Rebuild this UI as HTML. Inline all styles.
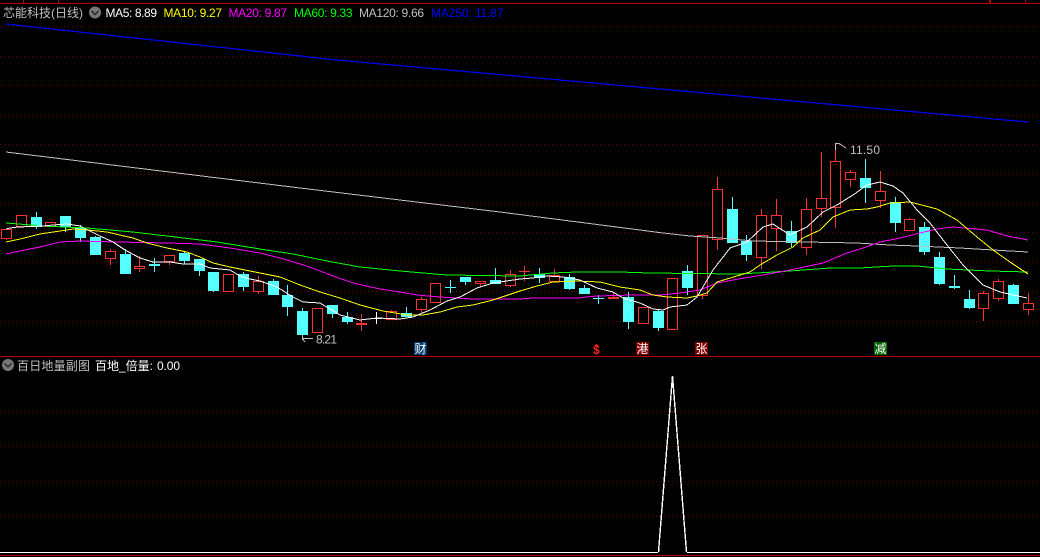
<!DOCTYPE html>
<html lang="zh"><head><meta charset="utf-8"><title>芯能科技</title>
<style>
html,body{margin:0;padding:0;background:#000;width:1040px;height:557px;overflow:hidden}
svg{display:block}
text{font-family:"Liberation Sans","WenQuanYi Zen Hei","Noto Sans CJK SC",sans-serif;font-size:12px}
</style></head><body>
<svg width="1040" height="557" viewBox="0 0 1040 557" xmlns="http://www.w3.org/2000/svg">
<rect width="1040" height="557" fill="#000"/>
<g shape-rendering="geometricPrecision" stroke="#700000" stroke-width="1" stroke-dasharray="1 3">
<path d="M0 26.5H1040M0 56.5H1040M0 85.5H1040M0 115.5H1040M0 144.5H1040M0 174.5H1040M0 203.5H1040M0 232.5H1040M0 262.5H1040M0 291.5H1040M0 321.5H1040M0 411.5H1040M0 446.5H1040M0 481.5H1040M0 516.5H1040" fill="none"/>
</g>
<g shape-rendering="crispEdges">
<path d="M0 3.5H1040M0 356.5H1040M0 555.5H1040M23.5 0V3M58.5 0V3M990.5 0V3M1025.5 0V3" stroke="#b80000" fill="none"/>
<path d="M989.5 0V3" stroke="#b80000"/>

<!-- red wicks -->
<path stroke="#ff3232" fill="none" d="M6.5 229V240M21.5 215V227M50.5 222V227M110.5 249V265M139.5 256V272M169.5 255V265M228.5 274V292M258.5 276V294M317.5 308V333M361.5 314V331M391.5 310V320M421.5 297V314M435.5 283V303M480.5 281V287M510.5 270V287M524.5 266V281M554.5 269V282M613.5 292V299M643.5 307V324M672.5 278V330M702.5 235V299M717.5 177V250M761.5 209V269M776.5 199V251M806.5 198V255M821.5 152V217M835.5 143V228M850.5 170V187M880.5 171V208M909.5 218V231M983.5 291V321M998.5 279V301M1028.5 293V315"/>
<!-- red bodies -->
<path stroke="#ff3232" fill="#000" d="M1.5 229.5H11.5V238.5H1.5ZM16.5 215.5H26.5V226.5H16.5ZM45.5 222.5H55.5V226.5H45.5ZM105.5 251.5H115.5V258.5H105.5ZM134.5 266.5H144.5V268.5H134.5ZM164.5 255.5H174.5V261.5H164.5ZM223.5 274.5H233.5V291.5H223.5ZM253.5 281.5H263.5V291.5H253.5ZM312.5 308.5H322.5V332.5H312.5ZM386.5 311.5H396.5V319.5H386.5ZM416.5 299.5H426.5V309.5H416.5ZM430.5 283.5H440.5V302.5H430.5ZM475.5 281.5H485.5V283.5H475.5ZM505.5 274.5H515.5V285.5H505.5ZM549.5 275.5H559.5V281.5H549.5ZM638.5 307.5H648.5V323.5H638.5ZM667.5 278.5H677.5V329.5H667.5ZM697.5 235.5H707.5V295.5H697.5ZM712.5 189.5H722.5V239.5H712.5ZM756.5 215.5H766.5V257.5H756.5ZM771.5 215.5H781.5V228.5H771.5ZM801.5 209.5H811.5V247.5H801.5ZM816.5 198.5H826.5V208.5H816.5ZM830.5 161.5H840.5V207.5H830.5ZM845.5 172.5H855.5V179.5H845.5ZM875.5 191.5H885.5V200.5H875.5ZM904.5 219.5H914.5V230.5H904.5ZM978.5 293.5H988.5V308.5H978.5ZM993.5 281.5H1003.5V298.5H993.5ZM1023.5 303.5H1033.5V309.5H1023.5Z"/>
<path fill="#ff3232" d="M356 323H367V325H356ZM608 297H619V299H608ZM519 271H530V272H519Z"/>

<!-- cyan wicks -->
<path stroke="#54ffff" fill="none" d="M36.5 212V229M65.5 216V232M80.5 225V242M95.5 236V255M125.5 249V274M154.5 258V272M184.5 252V264M199.5 259V276M213.5 272V292M243.5 272V291M273.5 279V295M287.5 285V316M302.5 308V340M332.5 305V318M347.5 312V324M406.5 307V317M450.5 280V293M465.5 277V285M495.5 268V284M539.5 268V283M569.5 274V290M584.5 285V294M598.5 295V304M628.5 292V329M658.5 309V331M687.5 265V295M732.5 197V243M746.5 235V261M791.5 221V247M865.5 159V203M895.5 197V232M924.5 222V255M939.5 252V285M954.5 275V289M969.5 290V309M1013.5 284V304"/>
<path fill="#54ffff" d="M31 217h11V227H31ZM60 216h11V227H60ZM75 228h11V238H75ZM90 237h11V255H90ZM120 254h11V274H120ZM149 264h11V266H149ZM179 253h11V261H179ZM194 259h11V271H194ZM208 272h11V291H208ZM238 274h11V287H238ZM268 281h11V295H268ZM282 295h11V307H282ZM297 311h11V335H297ZM327 305h11V314H327ZM342 317h11V322H342ZM401 313h11V317H401ZM445 287h11V288H445ZM460 277h11V282H460ZM490 280h11V284H490ZM534 274h11V278H534ZM564 277h11V289H564ZM579 288h11V294H579ZM593 298h11V299H593ZM623 297h11V322H623ZM653 311h11V328H653ZM682 271h11V288H682ZM727 209h11V243H727ZM741 241h11V255H741ZM786 231h11V243H786ZM860 178h11V188H860ZM890 202h11V223H890ZM919 227h11V252H919ZM934 257h11V284H934ZM949 286h11V288H949ZM964 299h11V308H964ZM1008 285h11V304H1008Z"/>
<path stroke="#fff" fill="none" d="M376.5 312V324M371 318.5H382"/>

<g fill="none" stroke-width="1">
<polyline stroke="#0000e8" points="6,24 337,60 1028,122" stroke-width="1.3"/>
<polyline stroke="#c0c0c0" points="6,152 300,188 500,212 640,230 663,233 690,236 720,238 753,241 857,243 890,245 917,246 960,248 993,250 1028,252"/>
<polyline stroke="#00ff00" points="6,223 43,226 87,228 133,232 167,236 217,242 260,249 293,254 327,261 360,267 400,271 447,275 520,276 553,273 577,272 620,272 650,273 737,274 757,273 790,271 830,268 860,268 893,266 917,266 947,269 990,271 1028,272"/>
<polyline stroke="#ff00ff" points="6,254 20,251 40,247 60,242 80,241 117,242 167,243 200,244 230,248 260,253 280,258 307,266 333,276 353,283 380,289 400,292 417,295 440,297 473,299 520,299 533,298 577,298 597,296 633,295 660,295 680,293 700,290 717,283 733,280 780,272 823,263 847,253 860,249 880,242 900,238 920,233 937,229 953,227 987,230 1007,236 1028,240"/>
<polyline stroke="#ffff00" points="6,242 20,239 40,234 60,231 73,229 88,230 107,232 133,238 147,243 167,248 187,252 200,257 213,263 230,267 260,273 280,277 300,285 320,292 340,298 360,305 383,311 407,315 423,315 440,312 457,307 473,305 493,300 520,291 537,286 553,282 577,281 600,282 620,287 640,290 653,295 667,297 687,298 697,296 707,293 717,282 750,272 760,265 777,255 793,247 803,238 820,230 833,217 850,210 867,209 877,207 890,203 910,202 937,209 957,220 977,237 993,250 1010,262 1028,274"/>
<polyline stroke="#ffffff" points="6,229 10,228 18,227 43,226 53,225 67,224 80,226 88,230 100,236 113,242 125,250 140,258 153,262 170,262 183,264 200,264 210,268 230,270 240,276 250,279 260,281 277,287 293,297 303,302 320,303 340,315 360,320 377,318 400,319 413,317 430,310 447,301 460,297 477,288 493,283 520,279 532,278 547,276 563,277 580,280 597,288 613,292 623,298 640,303 653,309 663,310 670,307 687,305 697,297 713,270 730,248 747,242 763,227 773,224 790,235 807,227 823,212 837,205 853,195 867,185 880,182 893,186 903,193 917,210 930,223 947,245 963,265 983,285 1000,292 1027,298"/>
<path stroke="#ffffff" d="M0 552.5H658M687 552.5H1040"/>
<path stroke="#ffffff" d="M658.5 552 L672.5 376 L686.5 552" stroke-width="1.4"/>
<path stroke="#c0c0c0" d="M302 338.5H313M302.5 335V339L305 342"/>
<path stroke="#c0c0c0" d="M835.5 143V150M836 143.5H839L846 148"/>
</g>

<!-- signal badges -->
<rect x="414" y="342" width="13" height="13" fill="#003a70"/>
<rect x="636" y="342" width="13" height="13" fill="#800000"/>
<rect x="695" y="342" width="13" height="13" fill="#800000"/>
<rect x="874" y="342" width="13" height="13" fill="#006400"/>
</g>

<text x="3" y="17" fill="#c0c0c0" textLength="80">芯能科技(日线)</text>
<circle cx="95" cy="12.5" r="6" fill="#777"/>
<path d="M91.5 11 L95 14.5 L98.5 11" fill="none" stroke="#222" stroke-width="1.3"/>
<text x="105.5" y="17" fill="#fff" textLength="51.5">MA5: 8.89</text>
<text x="163.5" y="17" fill="#ff0" textLength="58.5">MA10: 9.27</text>
<text x="228.5" y="17" fill="#f0f" textLength="58.5">MA20: 9.87</text>
<text x="294" y="17" fill="#0f0" textLength="58.5">MA60: 9.33</text>
<text x="359" y="17" fill="#c0c0c0" textLength="65">MA120: 9.66</text>
<text x="431" y="17" fill="#0000ff" textLength="72.5">MA250: 11.87</text>

<text x="316" y="343.5" fill="#c0c0c0" textLength="21">8.21</text>
<text x="850" y="154" fill="#c0c0c0" textLength="30">11.50</text>

<text x="414.5" y="353" fill="#fff">财</text>
<text x="593" y="354" fill="#ff2020" style="font-weight:bold">$</text>
<path d="M594 346.5L596.5 343.5L599 346.5Z" fill="#ff2020"/>
<text x="636.5" y="353" fill="#fff">港</text>
<text x="695.5" y="353" fill="#fff">张</text>
<text x="874.5" y="353" fill="#fff">减</text>

<circle cx="8" cy="365" r="6" fill="#777"/>
<path d="M4.5 363.5 L8 367 L11.5 363.5" fill="none" stroke="#222" stroke-width="1.3"/>
<text x="17" y="370" fill="#c0c0c0" textLength="73">百日地量副图</text>
<text x="95" y="370" fill="#fff" textLength="58">百地_倍量:</text>
<text x="157" y="370" fill="#fff" textLength="23">0.00</text>
</svg>
</body></html>
